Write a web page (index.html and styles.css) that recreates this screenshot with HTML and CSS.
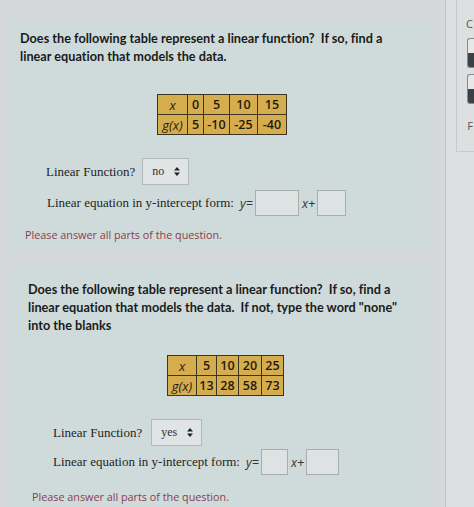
FILE: index.html
```html
<!DOCTYPE html>
<html>
<head>
<meta charset="utf-8">
<link rel="stylesheet" href="styles.css">
</head>
<body>
<div class="page">
  <div class="main">
    <section class="card card1">
      <p class="q">Does the following table represent a linear function?&nbsp; If so, find a linear equation that models the data.</p>
      <table class="tbl t1">
        <tr><td class="v">x</td><td>0</td><td>5</td><td>10</td><td>15</td></tr>
        <tr><td class="v">g(x)</td><td>5</td><td>-10</td><td>-25</td><td>-40</td></tr>
      </table>
      <div class="row lf">
        <span class="lbl">Linear Function?</span>
        <span class="sel"><span class="selv">no</span><svg class="arr" width="6" height="9" viewBox="0 0 6 9"><path d="M3 0L6 3.5H0Z M3 9L6 5.5H0Z" fill="#222"/></svg></span>
      </div>
      <div class="row eq">
        <span class="lbl">Linear equation in y-intercept form:</span>
        <span class="m">y=</span><span class="box b1"></span><span class="m">x+</span><span class="box b2"></span>
      </div>
      <p class="warn">Please answer all parts of the question.</p>
    </section>
    <section class="card card2">
      <p class="q">Does the following table represent a linear function?&nbsp; If so, find a linear equation that models the data.&nbsp; If not, type the word "none" into the blanks</p>
      <table class="tbl t2">
        <tr><td class="v">x</td><td>5</td><td>10</td><td>20</td><td>25</td></tr>
        <tr><td class="v">g(x)</td><td>13</td><td>28</td><td>58</td><td>73</td></tr>
      </table>
      <div class="row lf">
        <span class="lbl">Linear Function?</span>
        <span class="sel"><span class="selv">yes</span><svg class="arr" width="6" height="9" viewBox="0 0 6 9"><path d="M3 0L6 3.5H0Z M3 9L6 5.5H0Z" fill="#222"/></svg></span>
      </div>
      <div class="row eq">
        <span class="lbl">Linear equation in y-intercept form:</span>
        <span class="m">y=</span><span class="box b3"></span><span class="m">x+</span><span class="box b4"></span>
      </div>
      <p class="warn">Please answer all parts of the question.</p>
    </section>
  </div>
  <div class="divider"></div>
  <aside class="side">
    <div class="panel">
      <span class="pl">C</span>
      <span class="btn"></span>
      <span class="btn"></span>
      <span class="pl pf">F</span>
    </div>
  </aside>
</div>
</body>
</html>
```
FILE: styles.css
```css
html, body { margin: 0; padding: 0; }
body {
  background: #d7dada;
  width: 474px;
  height: 507px;
  overflow: hidden;
  color: #1c1c1c;
}
.page { display: flex; height: 507px; }
.main { width: 445px; background: #d4d8d8; }
.divider { width: 1px; background: #c2c6c6; }
.side { flex: 1; background: #dcdfdf; padding-left: 10px; }
.panel {
  height: 152px;
  border-left: 1px solid #c6caca;
  border-bottom: 1px solid #c6caca;
  background: #dde0e0;
  display: flex;
  flex-direction: column;
  align-items: flex-end;
  padding-top: 16px;
  box-sizing: border-box;
}
.pl { font-family: "Open Sans", sans-serif; font-size: 11px; color: #555; line-height: 16px; margin-right: 1px; }
.pf { margin-top: 14px; }
.btn {
  width: 6px; height: 28px; margin-top: 6px;
  border: 1px solid #888; border-right: 0;
  border-radius: 3px 0 0 3px;
  background: linear-gradient(#e8e8e8 50%, #3b4145 50%);
}
.card { background: #cfdbdb; box-sizing: border-box; }
.card1 { margin: 20px 0 0 10px; width: 420px; padding: 9px 0 8px; }
.card2 { margin: 17px 0 0 12px; width: 418px; padding: 13px 0 20px; }
.q {
  margin: 0;
  font-family: Lato, "Open Sans", sans-serif;
  font-weight: 700;
  font-size: 12.7px;
  line-height: 18px;
  color: #1a1a1a;
  font-variant-ligatures: none;
}
.card1 .q { padding: 0 30px 0 10px; }
.card2 .q { padding: 0 20px 0 16px; }
.tbl {
  border-collapse: collapse;
  background: #d6ad4e;
  font-family: "Open Sans", sans-serif;
  font-weight: 600;
  font-size: 12.5px;
  color: #1e1a12;
}
.tbl td {
  border: 1px solid #3d3422;
  text-align: center;
  padding: 0;
  height: 19px;
}
.tbl td.v { font-style: italic; font-weight: 400; font-size: 13px; }
.t1 { margin: 29px 0 0 147px; }
.t1 td:nth-child(1) { width: 29px; }
.t1 td:nth-child(2) { width: 15px; }
.t1 td:nth-child(3) { width: 25px; }
.t1 td:nth-child(4) { width: 27px; }
.t1 td:nth-child(5) { width: 28px; }
.t2 { margin: 21px 0 0 155px; }
.t2 td:nth-child(1) { width: 28px; }
.t2 td:nth-child(2) { width: 19px; }
.t2 td:nth-child(3) { width: 21px; }
.t2 td:nth-child(4) { width: 22px; }
.t2 td:nth-child(5) { width: 21px; }
.row {
  display: flex;
  align-items: center;
  font-family: "Liberation Serif", serif;
  font-size: 13px;
}
.card1 .lf { margin-top: 23px; padding-left: 36px; }
.card1 .eq { margin-top: 5px; padding-left: 37px; }
.card2 .lf { margin-top: 23px; padding-left: 41px; }
.card2 .eq { margin-top: 3px; padding-left: 41px; }
.lbl { color: #1e1e1e; }
.sel {
  display: flex;
  align-items: center;
  gap: 10px;
  height: 27px;
  box-sizing: border-box;
  border: 1px solid #b3b8b8;
  background: #e0e4e4;
  padding: 0 8px 0 9px;
  margin-left: 7px;
  font-size: 12px;
  color: #333;
}
.card2 .sel { margin-left: 9px; }
.m {
  font-family: "Open Sans", sans-serif;
  font-style: italic;
  font-size: 12.5px;
  color: #333;
  margin: 0 1px 0 6px;
}
.m + .box { margin-left: 1px; }
.box {
  height: 26px;
  box-sizing: border-box;
  border: 1px solid #a8aeae;
  background: #dde2e2;
}
.b1 { width: 44px; }
.b2 { width: 29px; }
.b3 { width: 27px; }
.b4 { width: 33px; }
.box + .m { margin-left: 3px; }
.warn {
  margin: 12px 0 0;
  font-family: "Open Sans", sans-serif;
  font-size: 10.8px;
  line-height: 14px;
  color: #8a3b4c;
}
.card1 .warn { padding-left: 15px; }
.card2 .warn { margin-top: 15px; padding-left: 20px; }
```
